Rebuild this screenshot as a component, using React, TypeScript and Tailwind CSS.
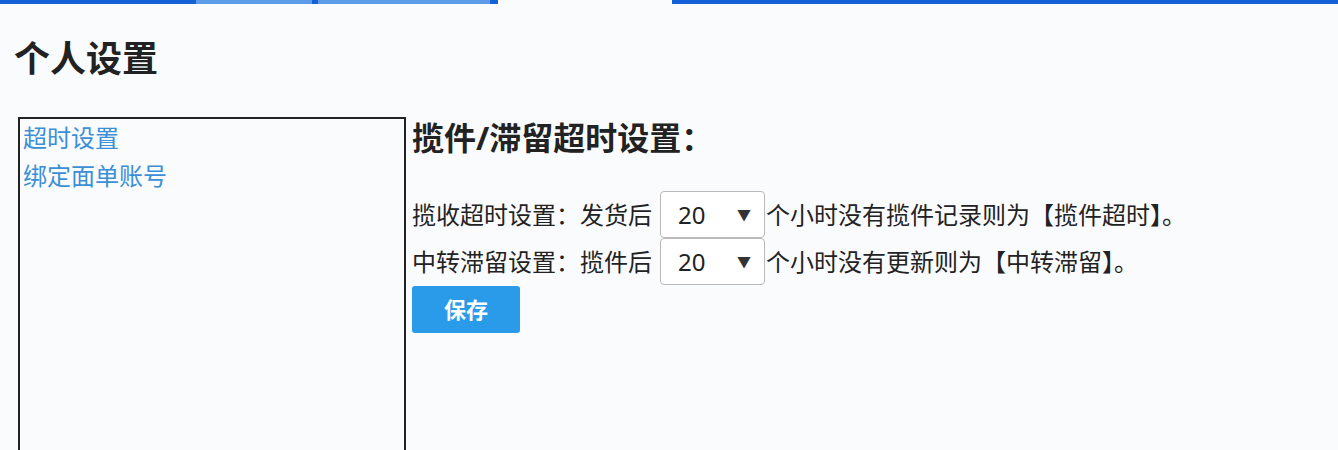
import React from "react";

const font = 'font-["Noto_Sans","Noto_Sans_CJK_SC",sans-serif]';

function HourSelect({ value }: { value: string }) {
    return (
        <div className="w-[105px] h-[47px] border border-[#b9b9b9] rounded-[4px] bg-white flex items-center justify-between pl-[17px] pr-[13px] ml-[8px] mr-[1px]">
            <span className="text-[24px] text-[#222]">{value}</span>
            <span className="text-[14px] text-[#333]">▼</span>
        </div>
    );
}

export default function App() {
    return (
        <div className={`${font} w-[1338px] h-[450px] overflow-hidden bg-[#fafbfd] text-[#222]`}>
            {/* tab strip */}
            <div className="flex h-[4px]">
                <div className="w-[196px] bg-[#1660d8]" />
                <div className="w-[116px] bg-[#5c9ce8]" />
                <div className="w-[6px] bg-[#1660d8]" />
                <div className="w-[172px] bg-[#5c9ce8]" />
                <div className="w-[8px] bg-[#1660d8]" />
                <div className="w-[174px] bg-transparent" />
                <div className="flex-1 bg-[#1660d8]" />
            </div>

            <h1 className="text-[36px] font-bold leading-none pl-[14px] pt-[37px] text-[#222]">个人设置</h1>

            <div className="flex mt-[40px] pl-[18px]">
                {/* side menu */}
                <div className="w-[388px] h-[400px] border-2 border-[#222] px-[3px] pt-0 flex flex-col">
                    <a className="text-[24px] leading-[38px] text-[#3b8fd6]">超时设置</a>
                    <a className="text-[24px] leading-[38px] text-[#3b8fd6]">绑定面单账号</a>
                </div>

                {/* timeout settings */}
                <div className="pl-[6px] pt-0">
                    <h2 className="text-[32px] font-bold leading-[42px]">揽件/滞留超时设置：</h2>
                    <div className="mt-[32px] flex flex-col">
                        <div className="flex items-center text-[24px]">
                            <span>揽收超时设置：发货后</span>
                            <HourSelect value="20" />
                            <span>个小时没有揽件记录则为【揽件超时】。</span>
                        </div>
                        <div className="flex items-center text-[24px]">
                            <span>中转滞留设置：揽件后</span>
                            <HourSelect value="20" />
                            <span>个小时没有更新则为【中转滞留】。</span>
                        </div>
                        <button className="mt-[1px] w-[108px] h-[47px] rounded-[3px] bg-[#2a9be8] text-white text-[22px] font-bold">
                            保存
                        </button>
                    </div>
                </div>
            </div>
        </div>
    );
}
